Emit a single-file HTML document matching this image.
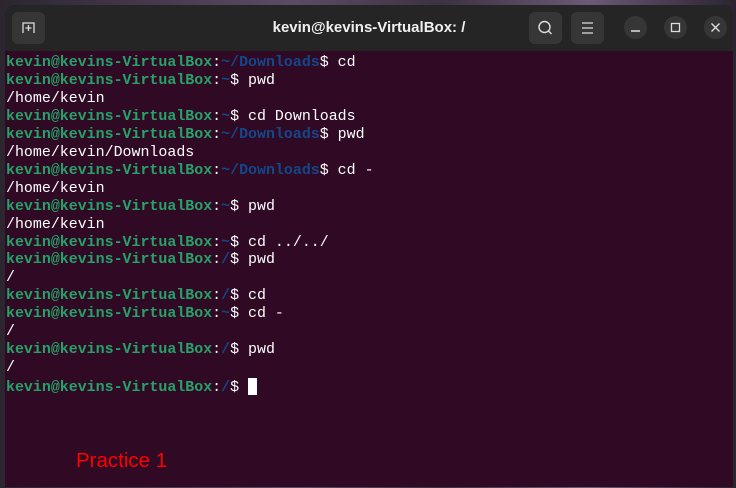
<!DOCTYPE html>
<html><head><style>
body{margin:0;width:736px;height:488px;overflow:hidden;background:#3a3042;position:relative;font-family:"Liberation Sans",sans-serif}
.bg{position:absolute;inset:0;background:linear-gradient(90deg,#2c2630,#5a4c66 40%,#3b3340 60%,#6a5a78 80%,#2a2430)}
.win{position:absolute;left:5px;top:5px;width:728px;height:482px;background:#300a24;border-radius:10px 10px 0 0;overflow:hidden}
.tb{height:46px;background:#252525;position:relative}
.title{position:absolute;left:0;right:0;top:14px;text-align:center;color:#f0f0f0;font-weight:bold;font-size:15px}
.btn{position:absolute;background:#363636;border-radius:6px}
.cb{position:absolute;top:11px;width:23px;height:23px;border-radius:50%;background:#363636}
pre{margin:0;position:absolute;left:1px;top:50px;font-family:"Liberation Mono",monospace;font-size:14.95px;line-height:17.95px;color:#fff}
.g{color:#26a269;font-weight:bold}.b{color:#12488b;font-weight:bold}
.cur{display:inline-block;width:9px;height:17px;background:#fff;vertical-align:-4px}
.p{position:absolute;color:#f00;font-size:20.5px}
</style></head><body>
<div class="bg"></div>
<div class="win">
<div class="tb">
<div class="btn" style="left:7px;top:7px;width:33px;height:32px"><svg width="33" height="32"><path d="M11 21V11h11v10M16.5 13v6M13.5 16h6" stroke="#ddd" stroke-width="1.3" fill="none"/></svg></div>
<div class="title">kevin@kevins-VirtualBox: /</div>
<div class="btn" style="left:524px;top:7px;width:33px;height:32px"><svg width="33" height="32"><circle cx="15.5" cy="15" r="5.5" stroke="#ddd" stroke-width="1.4" fill="none"/><path d="M19.5 19l3 3" stroke="#ddd" stroke-width="1.4"/></svg></div>
<div class="btn" style="left:566px;top:7px;width:33px;height:32px"><svg width="33" height="32"><path d="M11 11h11M11 16h11M11 21h11" stroke="#ddd" stroke-width="1.3"/></svg></div>
<div class="cb" style="left:619px"><svg width="23" height="23"><path d="M7 15h9" stroke="#ddd" stroke-width="1.4"/></svg></div>
<div class="cb" style="left:659px"><svg width="23" height="23"><rect x="7.5" y="7.5" width="8" height="8" stroke="#ddd" stroke-width="1.3" fill="none"/></svg></div>
<div class="cb" style="left:699px"><svg width="23" height="23"><path d="M7.5 7.5l8 8M15.5 7.5l-8 8" stroke="#ddd" stroke-width="1.4"/></svg></div>
</div>
<pre><span class="g">kevin@kevins-VirtualBox</span>:<span class="b">~/Downloads</span>$ cd
<span class="g">kevin@kevins-VirtualBox</span>:<span class="b">~</span>$ pwd
/home/kevin
<span class="g">kevin@kevins-VirtualBox</span>:<span class="b">~</span>$ cd Downloads
<span class="g">kevin@kevins-VirtualBox</span>:<span class="b">~/Downloads</span>$ pwd
/home/kevin/Downloads
<span class="g">kevin@kevins-VirtualBox</span>:<span class="b">~/Downloads</span>$ cd -
/home/kevin
<span class="g">kevin@kevins-VirtualBox</span>:<span class="b">~</span>$ pwd
/home/kevin
<span class="g">kevin@kevins-VirtualBox</span>:<span class="b">~</span>$ cd ../../
<span class="g">kevin@kevins-VirtualBox</span>:<span class="b">/</span>$ pwd
/
<span class="g">kevin@kevins-VirtualBox</span>:<span class="b">/</span>$ cd
<span class="g">kevin@kevins-VirtualBox</span>:<span class="b">~</span>$ cd -
/
<span class="g">kevin@kevins-VirtualBox</span>:<span class="b">/</span>$ pwd
/
<span class="g">kevin@kevins-VirtualBox</span>:<span class="b">/</span>$ <span class="cur"></span></pre>
<div class="p" style="left:71px;top:444px">Practice 1</div>
</div>
</body></html>
